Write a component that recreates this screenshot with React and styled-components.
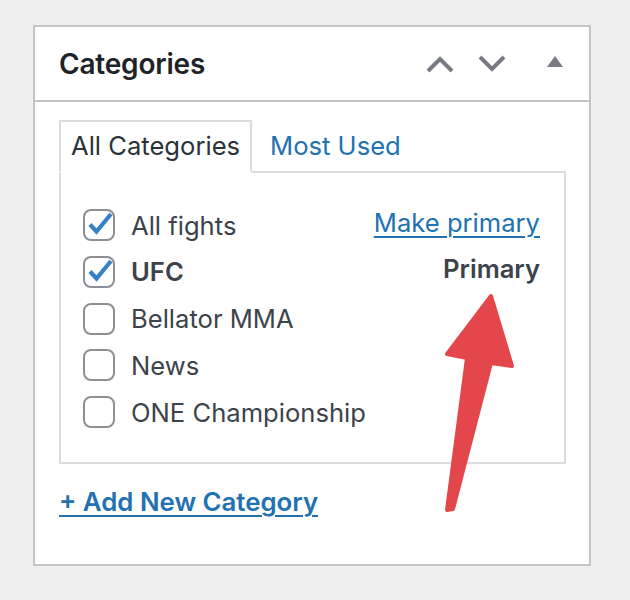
import React from "react";
import styled, { createGlobalStyle } from "styled-components";

const Global = createGlobalStyle`
  html, body { margin: 0; padding: 0; background: #f0f0f0; }
  body { font-family: Inter, "Noto Sans", "Liberation Sans", sans-serif; }
  * { box-sizing: border-box; }
`;

const Page = styled.div`
  position: relative;
  width: 630px;
  height: 600px;
  padding: 25px 0 0 33px;
`;

const Panel = styled.section`
  width: 558px;
  height: 541px;
  background: #fff;
  border: 2px solid #c3c4c7;
  display: flex;
  flex-direction: column;
`;

const Header = styled.header`
  height: 75px;
  border-bottom: 2px solid #c3c4c7;
  display: flex;
  align-items: center;
  justify-content: space-between;
  padding: 0 26px 0 24px;
`;

const Title = styled.h2`
  margin: 0;
  font-size: 28px;
  font-weight: 600;
  color: #1d2327;
  letter-spacing: -0.2px;
`;

const Controls = styled.div`
  display: flex;
  align-items: center;
`;

const IconButton = styled.span`
  display: flex;
  align-items: center;
  justify-content: center;
  height: 30px;
  margin-left: ${(p) => p.$gap || 0}px;
`;

const Body = styled.div`
  padding: 18px 23px 0 24px;
  display: flex;
  flex-direction: column;
`;

const Tabs = styled.div`
  display: flex;
  align-items: flex-end;
  margin-bottom: -2px;
  position: relative;
  z-index: 1;
`;

const Tab = styled.span`
  display: flex;
  align-items: center;
  height: 53px;
  padding: 0 10px 2px;
  font-size: 25.6px;
  color: ${(p) => (p.$active ? "#2c3338" : "#2271b1")};
  background: ${(p) => (p.$active ? "#fff" : "transparent")};
  border: 2px solid ${(p) => (p.$active ? "#dcdcde" : "transparent")};
  border-bottom-color: ${(p) => (p.$active ? "#fff" : "transparent")};
  margin-left: ${(p) => (p.$active ? 0 : 6)}px;
`;

const TabPanel = styled.div`
  border: 2px solid #dcdcde;
  height: 293px;
  padding: 36px 24px 0 22px;
  display: flex;
  flex-direction: column;
  gap: 14.8px;
`;

const Row = styled.label`
  display: flex;
  align-items: center;
  height: 32px;
  gap: 16px;
  font-size: 25.6px;
  color: #3c434a;
  font-weight: ${(p) => (p.$bold ? 600 : 400)};
`;

const Box = styled.span`
  width: 32px;
  height: 32px;
  border: 2px solid #8c8f94;
  border-radius: 8px;
  flex: none;
  position: relative;
  display: block;
`;

const Label = styled.span`
  flex: 1;
`;

const Aside = styled.span`
  font-size: 25.6px;
  color: ${(p) => (p.$link ? "#2271b1" : "#3c434a")};
  font-weight: ${(p) => (p.$link ? 400 : 600)};
  text-decoration: ${(p) => (p.$link ? "underline" : "none")};
  text-underline-offset: 4px;
  text-decoration-thickness: 2px;
  margin-top: -6px;
`;

const AddLink = styled.a`
  margin-top: 22px;
  font-size: 25.8px;
  font-weight: 600;
  color: #2271b1;
  text-decoration: underline;
  text-underline-offset: 4px;
  text-decoration-thickness: 2px;
  align-self: flex-start;
`;

const Overlay = styled.svg`
  position: absolute;
  left: 0;
  top: 0;
  pointer-events: none;
`;

const Check = () => (
  <svg width="32" height="32" viewBox="0 0 32 32" style={{ position: "absolute", left: -2, top: -2 }}>
    <path d="M7 15.5 L13.5 22.5 L28 5" fill="none" stroke="#3582c4" strokeWidth="4.2" />
  </svg>
);

const CheckBox = ({ checked }) => <Box>{checked && <Check />}</Box>;

const items = [
  { name: "All fights", checked: true, aside: "Make primary", link: true },
  { name: "UFC", checked: true, bold: true, aside: "Primary" },
  { name: "Bellator MMA" },
  { name: "News" },
  { name: "ONE Championship" },
];

export default function App() {
  return (
    <>
      <Global />
      <Page>
        <Panel>
          <Header>
            <Title>Categories</Title>
            <Controls>
              <IconButton>
                <svg width="28" height="18" viewBox="0 0 28 18">
                  <path d="M2 16 L14 4 L26 16" fill="none" stroke="#787c82" strokeWidth="4" />
                </svg>
              </IconButton>
              <IconButton $gap={24}>
                <svg width="28" height="18" viewBox="0 0 28 18">
                  <path d="M2 2 L14 14 L26 2" fill="none" stroke="#787c82" strokeWidth="4" />
                </svg>
              </IconButton>
              <IconButton $gap={41}>
                <svg width="16" height="12" viewBox="0 0 16 12" style={{ marginTop: -4 }}>
                  <path d="M8 0 L16 11 L0 11 Z" fill="#787c82" />
                </svg>
              </IconButton>
            </Controls>
          </Header>
          <Body>
            <Tabs>
              <Tab $active>All Categories</Tab>
              <Tab>Most Used</Tab>
            </Tabs>
            <TabPanel>
              {items.map((it) => (
                <Row key={it.name} $bold={it.bold}>
                  <CheckBox checked={it.checked} />
                  <Label>{it.name}</Label>
                  {it.aside && <Aside $link={it.link}>{it.aside}</Aside>}
                </Row>
              ))}
            </TabPanel>
            <AddLink href="#">+ Add New Category</AddLink>
          </Body>
        </Panel>
        <Overlay width="630" height="600" viewBox="0 0 630 600">
          <path
            d="M491 296 L512 366 L491 363 L453 509 L447 510 L467 358 L447 354 Z"
            fill="#e3474c"
            stroke="#e3474c"
            strokeWidth="4"
            strokeLinejoin="round"
          />
        </Overlay>
      </Page>
    </>
  );
}
